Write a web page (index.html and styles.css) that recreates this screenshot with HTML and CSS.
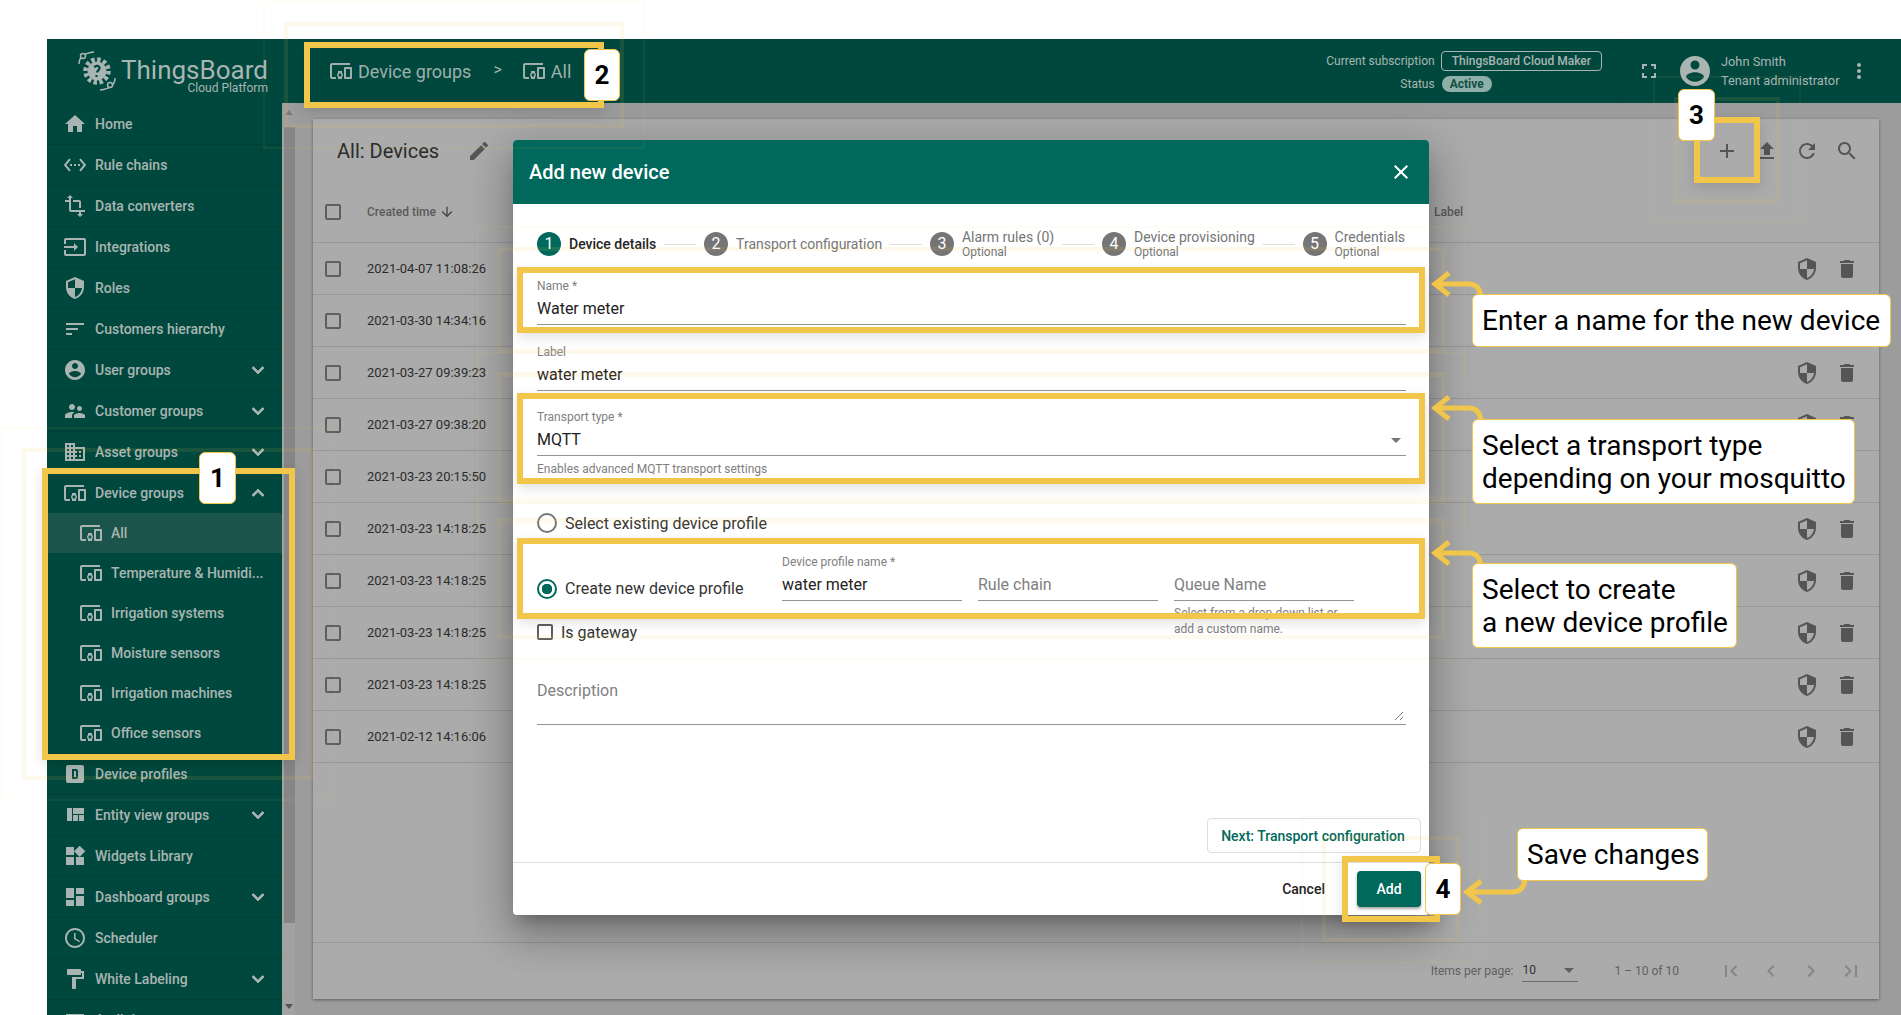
FILE: index.html
```html
<!DOCTYPE html>
<html lang="en">

<head>
  <meta charset="utf-8">
  <title>Add new device</title>
  <link rel="stylesheet" href="styles.css">
</head>

<body>
  <svg class="sprite" xmlns="http://www.w3.org/2000/svg">
    <symbol id="i-home" viewBox="0 0 24 24"><path d="M10 20v-6h4v6h5v-8h3L12 3 2 12h3v8z"/></symbol>
    <symbol id="i-rule" viewBox="0 0 24 24"><path d="M7.77 6.76L6.23 5.48.82 12l5.41 6.52 1.54-1.28L3.42 12l4.35-5.24zM7 13h2v-2H7v2zm10-2h-2v2h2v-2zm-6 2h2v-2h-2v2zm6.77-7.52l-1.54 1.28L20.58 12l-4.35 5.24 1.54 1.28L23.18 12l-5.41-6.52z"/></symbol>
    <symbol id="i-transform" viewBox="0 0 24 24"><path d="M22 18v-2H8V4h2L7 1 4 4h2v2H2v2h4v8c0 1.1.9 2 2 2h8v2h-2l3 3 3-3h-2v-2h4zM10 8h6v6h2V8c0-1.1-.9-2-2-2h-6v2z"/></symbol>
    <symbol id="i-input" viewBox="0 0 24 24"><path d="M21 3.01H3c-1.1 0-2 .9-2 2V9h2V4.99h18v14.03H3V15H1v4.01c0 1.1.9 1.98 2 1.98h18c1.1 0 2-.88 2-1.98v-14c0-1.11-.9-2-2-2zM11 16l4-4-4-4v3H1v2h10v3z"/></symbol>
    <symbol id="i-security" viewBox="0 0 24 24"><path d="M12 1L3 5v6c0 5.55 3.84 10.74 9 12 5.16-1.26 9-6.45 9-12V5l-9-4zm0 10.99h7c-.53 4.12-3.28 7.79-7 8.94V12H5V6.3l7-3.11v8.8z"/></symbol>
    <symbol id="i-sort" viewBox="0 0 24 24"><path d="M3 18h6v-2H3v2zM3 6v2h18V6H3zm0 7h12v-2H3v2z"/></symbol>
    <symbol id="i-account" viewBox="0 0 24 24"><path d="M12 2C6.48 2 2 6.48 2 12s4.48 10 10 10 10-4.48 10-10S17.52 2 12 2zm0 3c1.66 0 3 1.34 3 3s-1.34 3-3 3-3-1.34-3-3 1.34-3 3-3zm0 14.2c-2.5 0-4.71-1.28-6-3.22.03-1.99 4-3.08 6-3.08 1.99 0 5.97 1.09 6 3.08-1.29 1.94-3.5 3.22-6 3.22z"/></symbol>
    <symbol id="i-people" viewBox="0 0 24 24"><path d="M16.5 12c1.38 0 2.49-1.12 2.49-2.5S17.88 7 16.5 7C15.12 7 14 8.12 14 9.5s1.12 2.5 2.5 2.5zM9 11c1.66 0 2.99-1.34 2.99-3S10.66 5 9 5C7.34 5 6 6.34 6 8s1.34 3 3 3zm7.5 3c-1.83 0-5.5.92-5.5 2.75V19h11v-2.25c0-1.83-3.67-2.75-5.5-2.75zM9 13c-2.33 0-7 1.17-7 3.5V19h7v-2.25c0-.85.33-2.34 2.37-3.47C10.5 13.1 9.66 13 9 13z"/></symbol>
    <symbol id="i-domain" viewBox="0 0 24 24"><path d="M12 7V3H2v18h20V7H12zM6 19H4v-2h2v2zm0-4H4v-2h2v2zm0-4H4V9h2v2zm0-4H4V5h2v2zm4 12H8v-2h2v2zm0-4H8v-2h2v2zm0-4H8V9h2v2zm0-4H8V5h2v2zm10 12h-8v-2h2v-2h-2v-2h2v-2h-2V9h8v10zm-2-8h-2v2h2v-2zm0 4h-2v2h2v-2z"/></symbol>
    <symbol id="i-devices" viewBox="0 0 24 24"><path d="M3 6h18V4H3c-1.1 0-2 .9-2 2v12c0 1.1.9 2 2 2h4v-2H3V6zm10 6H9v1.78c-.61.55-1 1.33-1 2.22s.39 1.67 1 2.22V20h4v-1.78c.61-.55 1-1.34 1-2.22s-.39-1.67-1-2.22V12zm-2 5.5c-.83 0-1.5-.67-1.5-1.5s.67-1.5 1.5-1.5 1.5.67 1.5 1.5-.67 1.5-1.5 1.5zM22 8h-6c-.5 0-1 .5-1 1v10c0 .5.5 1 1 1h6c.5 0 1-.5 1-1V9c0-.5-.5-1-1-1zm-1 10h-4v-8h4v8z"/></symbol>
    <symbol id="i-dbox" viewBox="0 0 24 24"><path fill-rule="evenodd" d="M9 7v10h4a2 2 0 0 0 2-2V9a2 2 0 0 0-2-2H9m2 2h2v6h-2V9M5 3h14a2 2 0 0 1 2 2v14a2 2 0 0 1-2 2H5a2 2 0 0 1-2-2V5a2 2 0 0 1 2-2z"/></symbol>
    <symbol id="i-quilt" viewBox="0 0 24 24"><path d="M10 18h5v-6h-5v6zm-6 0h5V5H4v13zm12 0h5v-6h-5v6zM10 5v6h11V5H10z"/></symbol>
    <symbol id="i-widgets" viewBox="0 0 24 24"><path d="M13 13v8h8v-8h-8zM3 21h8v-8H3v8zM3 3v8h8V3H3zm13.66-1.31L11 7.34 16.66 13l5.66-5.66-5.66-5.65z"/></symbol>
    <symbol id="i-dashboard" viewBox="0 0 24 24"><path d="M3 13h8V3H3v10zm0 8h8v-6H3v6zm10 0h8V11h-8v10zm0-18v6h8V3h-8z"/></symbol>
    <symbol id="i-schedule" viewBox="0 0 24 24"><path d="M11.99 2C6.47 2 2 6.48 2 12s4.47 10 9.99 10C17.52 22 22 17.52 22 12S17.52 2 11.99 2zM12 20c-4.42 0-8-3.58-8-8s3.58-8 8-8 8 3.58 8 8-3.58 8-8 8zm.5-13H11v6l5.25 3.15.75-1.23-4.5-2.67z"/></symbol>
    <symbol id="i-paint" viewBox="0 0 24 24"><path d="M18 4V3c0-.55-.45-1-1-1H5c-.55 0-1 .45-1 1v4c0 .55.45 1 1 1h12c.55 0 1-.45 1-1V6h1v4H9v11c0 .55.45 1 1 1h2c.55 0 1-.45 1-1v-9h8V4h-3z"/></symbol>
    <symbol id="i-more" viewBox="0 0 24 24"><path d="M16.59 8.59L12 13.17 7.41 8.59 6 10l6 6 6-6z"/></symbol>
    <symbol id="i-less" viewBox="0 0 24 24"><path d="M12 8l-6 6 1.41 1.41L12 10.83l4.59 4.58L18 14z"/></symbol>
    <symbol id="i-edit" viewBox="0 0 24 24"><path d="M3 17.25V21h3.75L17.81 9.94l-3.75-3.75L3 17.25zM20.71 7.04c.39-.39.39-1.02 0-1.41l-2.34-2.34c-.39-.39-1.02-.39-1.41 0l-1.83 1.83 3.75 3.75 1.83-1.83z"/></symbol>
    <symbol id="i-add" viewBox="0 0 24 24"><path d="M19 13h-6v6h-2v-6H5v-2h6V5h2v6h6v2z"/></symbol>
    <symbol id="i-upload" viewBox="0 0 24 24"><path d="M9 16h6v-6h4l-7-7-7 7h4zm-4 2h14v2H5z"/></symbol>
    <symbol id="i-refresh" viewBox="0 0 24 24"><path d="M17.65 6.35C16.2 4.9 14.21 4 12 4c-4.42 0-7.99 3.58-7.99 8s3.57 8 7.99 8c3.73 0 6.84-2.55 7.73-6h-2.08c-.82 2.33-3.04 4-5.65 4-3.31 0-6-2.69-6-6s2.69-6 6-6c1.66 0 3.14.69 4.22 1.78L13 11h7V4l-2.35 2.35z"/></symbol>
    <symbol id="i-search" viewBox="0 0 24 24"><path d="M15.5 14h-.79l-.28-.27C15.41 12.59 16 11.11 16 9.5 16 5.91 13.09 3 9.5 3S3 5.91 3 9.5 5.91 16 9.5 16c1.61 0 3.09-.59 4.23-1.57l.27.28v.79l5 4.99L20.49 19l-4.99-5zm-6 0C7.01 14 5 11.99 5 9.5S7.01 5 9.5 5 14 7.01 14 9.5 11.99 14 9.5 14z"/></symbol>
    <symbol id="i-delete" viewBox="0 0 24 24"><path d="M6 19c0 1.1.9 2 2 2h8c1.1 0 2-.9 2-2V7H6v12zM19 4h-3.5l-1-1h-5l-1 1H5v2h14V4z"/></symbol>
    <symbol id="i-close" viewBox="0 0 24 24"><path d="M19 6.41L17.59 5 12 10.59 6.41 5 5 6.41 10.59 12 5 17.59 6.41 19 12 13.41 17.59 19 19 17.59 13.41 12z"/></symbol>
    <symbol id="i-fullscreen" viewBox="0 0 24 24"><path d="M7 14H5v5h5v-2H7v-3zm-2-4h2V7h3V5H5v5zm12 7h-3v2h5v-5h-2v3zM14 5v2h3v3h2V5h-5z"/></symbol>
    <symbol id="i-dots" viewBox="0 0 24 24"><path d="M12 8c1.1 0 2-.9 2-2s-.9-2-2-2-2 .9-2 2 .9 2 2 2zm0 2c-1.1 0-2 .9-2 2s.9 2 2 2 2-.9 2-2-.9-2-2-2zm0 6c-1.1 0-2 .9-2 2s.9 2 2 2 2-.9 2-2-.9-2-2-2z"/></symbol>
    <symbol id="i-down" viewBox="0 0 24 24"><path d="M20 12l-1.41-1.41L13 16.17V4h-2v12.17l-5.58-5.59L4 12l8 8 8-8z"/></symbol>
    <symbol id="i-first" viewBox="0 0 24 24"><path d="M18.41 16.59L13.82 12l4.59-4.59L17 6l-6 6 6 6zM6 6h2v12H6z"/></symbol>
    <symbol id="i-prev" viewBox="0 0 24 24"><path d="M15.41 7.41L14 6l-6 6 6 6 1.41-1.41L10.83 12z"/></symbol>
    <symbol id="i-next" viewBox="0 0 24 24"><path d="M10 6L8.59 7.41 13.17 12l-4.58 4.59L10 18l6-6z"/></symbol>
    <symbol id="i-last" viewBox="0 0 24 24"><path d="M5.59 7.41L10.18 12l-4.59 4.59L7 18l6-6-6-6zM16 6h2v12h-2z"/></symbol>
  </svg>

  <div class="app">
    <header class="toolbar">
      <div class="logo">
        <svg class="logo-mark" viewBox="0 0 40 40">
          <circle cx="20" cy="20" r="9.5" fill="#a9b5b2"/>
          <circle cx="20" cy="20" r="11.5" fill="none" stroke="#a9b5b2" stroke-width="4.500" stroke-dasharray="3.500 2.500"/>
          <path d="M17.5 16.5c1-2.5 5.500-2 5 1-.3 1.800-2.500 2-2.500 4M19.500 24v2" fill="none" stroke="#00483d" stroke-width="2.200"/>
          <path d="M2 13C2 6 8 2 17 1M38 27c0 7-6 11-15 12" fill="none" stroke="#a9b5b2" stroke-width="1.500"/>
          <circle cx="6" cy="5" r="2.500" fill="#00483d" stroke="#a9b5b2" stroke-width="1.500"/>
          <circle cx="33" cy="34" r="2.500" fill="#00483d" stroke="#a9b5b2" stroke-width="1.500"/>
        </svg>
        <div class="logo-text">
          <div class="logo-name">ThingsBoard</div>
          <div class="logo-sub">Cloud Platform</div>
        </div>
      </div>
      <div class="crumbs">
        <svg class="ic"><use href="#i-devices"/></svg><span class="crumb">Device groups</span>
        <span class="crumb-sep">&gt;</span>
        <svg class="ic"><use href="#i-devices"/></svg><span class="crumb">All</span>
      </div>
      <div class="subscription">
        <span class="sub-label">Current subscription</span><span class="sub-plan">ThingsBoard Cloud Maker</span>
        <span class="sub-label">Status</span><span class="sub-status">Active</span>
      </div>
      <div class="tool-user">
        <svg class="ic"><use href="#i-fullscreen"/></svg>
        <svg class="avatar"><use href="#i-account"/></svg>
        <div class="user-text">
          <div class="user-name">John Smith</div>
          <div class="user-role">Tenant administrator</div>
        </div>
        <svg class="ic"><use href="#i-dots"/></svg>
      </div>
    </header>

    <div class="shell">
      <nav class="sidebar">
        <a class="nav-item"><svg class="ic"><use href="#i-home"/></svg>Home</a>
        <a class="nav-item"><svg class="ic"><use href="#i-rule"/></svg>Rule chains</a>
        <a class="nav-item"><svg class="ic"><use href="#i-transform"/></svg>Data converters</a>
        <a class="nav-item"><svg class="ic"><use href="#i-input"/></svg>Integrations</a>
        <a class="nav-item"><svg class="ic"><use href="#i-security"/></svg>Roles</a>
        <a class="nav-item"><svg class="ic"><use href="#i-sort"/></svg>Customers hierarchy</a>
        <a class="nav-item"><svg class="ic"><use href="#i-account"/></svg>User groups<svg class="ic nav-arrow"><use href="#i-more"/></svg></a>
        <a class="nav-item"><svg class="ic"><use href="#i-people"/></svg>Customer groups<svg class="ic nav-arrow"><use href="#i-more"/></svg></a>
        <a class="nav-item"><svg class="ic"><use href="#i-domain"/></svg>Asset groups<svg class="ic nav-arrow"><use href="#i-more"/></svg></a>
        <a class="nav-item nav-open"><svg class="ic"><use href="#i-devices"/></svg>Device groups<svg class="ic nav-arrow"><use href="#i-less"/></svg></a>
        <div class="nav-sub">
          <a class="sub-item active"><svg class="ic"><use href="#i-devices"/></svg>All</a>
          <a class="sub-item"><svg class="ic"><use href="#i-devices"/></svg>Temperature &amp; Humidi...</a>
          <a class="sub-item"><svg class="ic"><use href="#i-devices"/></svg>Irrigation systems</a>
          <a class="sub-item"><svg class="ic"><use href="#i-devices"/></svg>Moisture sensors</a>
          <a class="sub-item"><svg class="ic"><use href="#i-devices"/></svg>Irrigation machines</a>
          <a class="sub-item"><svg class="ic"><use href="#i-devices"/></svg>Office sensors</a>
        </div>
        <a class="nav-item"><svg class="ic"><use href="#i-dbox"/></svg>Device profiles</a>
        <a class="nav-item"><svg class="ic"><use href="#i-quilt"/></svg>Entity view groups<svg class="ic nav-arrow"><use href="#i-more"/></svg></a>
        <a class="nav-item"><svg class="ic"><use href="#i-widgets"/></svg>Widgets Library</a>
        <a class="nav-item"><svg class="ic"><use href="#i-dashboard"/></svg>Dashboard groups<svg class="ic nav-arrow"><use href="#i-more"/></svg></a>
        <a class="nav-item"><svg class="ic"><use href="#i-schedule"/></svg>Scheduler</a>
        <a class="nav-item"><svg class="ic"><use href="#i-paint"/></svg>White Labeling<svg class="ic nav-arrow"><use href="#i-more"/></svg></a>
        <a class="nav-item"><svg class="ic"><use href="#i-sort"/></svg>Audit logs</a>
      </nav>
      <div class="side-scroll">
        <div class="scroll-up"></div>
        <div class="scroll-thumb"></div>
        <div class="scroll-down"></div>
      </div>

      <main class="content">
        <section class="card">
          <div class="card-head">
            <span class="card-title">All: Devices</span>
            <svg class="ic"><use href="#i-edit"/></svg>
            <div class="card-actions">
              <svg class="ic"><use href="#i-add"/></svg>
              <svg class="ic"><use href="#i-upload"/></svg>
              <svg class="ic"><use href="#i-refresh"/></svg>
              <svg class="ic"><use href="#i-search"/></svg>
            </div>
          </div>
          <div class="row row-head">
            <span class="check"></span>
            <span class="col-time">Created time <svg class="sort-ic"><use href="#i-down"/></svg></span>
            <span>Label</span>
          </div>
          <div class="row"><span class="check"></span><span class="col-time">2021-04-07 11:08:26</span><span class="row-actions"><svg class="ic"><use href="#i-security"/></svg><svg class="ic"><use href="#i-delete"/></svg></span></div>
          <div class="row"><span class="check"></span><span class="col-time">2021-03-30 14:34:16</span><span class="row-actions"><svg class="ic"><use href="#i-security"/></svg><svg class="ic"><use href="#i-delete"/></svg></span></div>
          <div class="row"><span class="check"></span><span class="col-time">2021-03-27 09:39:23</span><span class="row-actions"><svg class="ic"><use href="#i-security"/></svg><svg class="ic"><use href="#i-delete"/></svg></span></div>
          <div class="row"><span class="check"></span><span class="col-time">2021-03-27 09:38:20</span><span class="row-actions"><svg class="ic"><use href="#i-security"/></svg><svg class="ic"><use href="#i-delete"/></svg></span></div>
          <div class="row"><span class="check"></span><span class="col-time">2021-03-23 20:15:50</span><span class="row-actions"><svg class="ic"><use href="#i-security"/></svg><svg class="ic"><use href="#i-delete"/></svg></span></div>
          <div class="row"><span class="check"></span><span class="col-time">2021-03-23 14:18:25</span><span class="row-actions"><svg class="ic"><use href="#i-security"/></svg><svg class="ic"><use href="#i-delete"/></svg></span></div>
          <div class="row"><span class="check"></span><span class="col-time">2021-03-23 14:18:25</span><span class="row-actions"><svg class="ic"><use href="#i-security"/></svg><svg class="ic"><use href="#i-delete"/></svg></span></div>
          <div class="row"><span class="check"></span><span class="col-time">2021-03-23 14:18:25</span><span class="row-actions"><svg class="ic"><use href="#i-security"/></svg><svg class="ic"><use href="#i-delete"/></svg></span></div>
          <div class="row"><span class="check"></span><span class="col-time">2021-03-23 14:18:25</span><span class="row-actions"><svg class="ic"><use href="#i-security"/></svg><svg class="ic"><use href="#i-delete"/></svg></span></div>
          <div class="row"><span class="check"></span><span class="col-time">2021-02-12 14:16:06</span><span class="row-actions"><svg class="ic"><use href="#i-security"/></svg><svg class="ic"><use href="#i-delete"/></svg></span></div>
          <div class="pager">
            <span>Items per page:</span>
            <span class="pager-select">10</span>
            <span class="pager-range">1 – 10 of 10</span>
            <div class="pager-btns">
              <svg class="ic"><use href="#i-first"/></svg>
              <svg class="ic"><use href="#i-prev"/></svg>
              <svg class="ic"><use href="#i-next"/></svg>
              <svg class="ic"><use href="#i-last"/></svg>
            </div>
          </div>
        </section>
      </main>
    </div>
  </div>

  <div class="modal">
    <div class="modal-head">
      <span>Add new device</span>
      <svg class="ic"><use href="#i-close"/></svg>
    </div>
    <div class="stepper">
      <div class="step on"><span class="step-num">1</span><div>Device details</div></div>
      <span class="step-line"></span>
      <div class="step"><span class="step-num">2</span><div>Transport configuration</div></div>
      <span class="step-line"></span>
      <div class="step"><span class="step-num">3</span><div>Alarm rules (0)<small>Optional</small></div></div>
      <span class="step-line"></span>
      <div class="step"><span class="step-num">4</span><div>Device provisioning<small>Optional</small></div></div>
      <span class="step-line"></span>
      <div class="step"><span class="step-num">5</span><div>Credentials<small>Optional</small></div></div>
    </div>
    <div class="modal-body">
      <div class="field">
        <label>Name *</label>
        <div class="value">Water meter</div>
      </div>
      <div class="field field-label">
        <label>Label</label>
        <div class="value">water meter</div>
      </div>
      <div class="field field-type">
        <label>Transport type *</label>
        <div class="value">MQTT<span class="caret"></span></div>
      </div>
      <div class="hint">Enables advanced MQTT transport settings</div>

      <div class="radio-row"><span class="radio"></span>Select existing device profile</div>
      <div class="profile-row">
        <div class="radio-row radio-new"><span class="radio checked"></span>Create new device profile</div>
        <div class="field col">
          <label>Device profile name *</label>
          <div class="value">water meter</div>
        </div>
        <div class="field col">
          <label>&nbsp;</label>
          <div class="value empty">Rule chain</div>
        </div>
        <div class="field col">
          <label>&nbsp;</label>
          <div class="value empty">Queue Name</div>
          <div class="hint">Select from a drop-down list or add a custom name.</div>
        </div>
      </div>
      <div class="gateway"><span class="check"></span>Is gateway</div>
      <div class="description">
        Description
        <svg class="grip" viewBox="0 0 10 10"><path d="M1 9L9 1M6 9L9 6" stroke="#777" fill="none"/></svg>
      </div>
      <div class="next-wrap"><span class="next-btn">Next: Transport configuration</span></div>
    </div>
    <div class="modal-foot">
      <span class="cancel">Cancel</span>
      <span class="add-btn">Add</span>
    </div>
  </div>

  <!-- tutorial annotations drawn over the screenshot -->
  <div class="mark mark-sidebar"></div>
  <div class="mark mark-crumbs"></div>
  <div class="mark mark-add"></div>
  <div class="mark mark-name"></div>
  <div class="mark mark-type"></div>
  <div class="mark mark-profile"></div>
  <div class="mark mark-save"></div>

  <div class="badge badge-1">1</div>
  <div class="badge badge-2">2</div>
  <div class="badge badge-3">3</div>
  <div class="badge badge-4">4</div>

  <svg class="arrow arrow-name" viewBox="0 0 60 28"><path d="M20 3L6 14L20 25M6 14H40Q50 14 52 26"/></svg>
  <svg class="arrow arrow-type" viewBox="0 0 60 28"><path d="M20 3L6 14L20 25M6 14H40Q50 14 52 26"/></svg>
  <svg class="arrow arrow-profile" viewBox="0 0 60 28"><path d="M20 3L6 14L20 25M6 14H40Q50 14 52 26"/></svg>
  <svg class="arrow arrow-save" viewBox="0 0 66 28"><path d="M20 3L6 14L20 25M6 14H52Q62 14 64 2"/></svg>

  <div class="callout callout-name">Enter a name for the new device</div>
  <div class="callout callout-type">Select a transport type<br>depending on your mosquitto</div>
  <div class="callout callout-profile">Select to create<br>a new device profile</div>
  <div class="callout callout-save">Save changes</div>
</body>

</html>
```

FILE: styles.css
```css
* {
  box-sizing: border-box;
}

html,
body {
  margin: 0;
  height: 1015px;
  overflow: hidden;
  background: #fff;
  font-family: 'Roboto', 'Liberation Sans', sans-serif;
  font-size: 14px;
}

.sprite {
  display: none;
}

.ic {
  width: 24px;
  height: 24px;
  flex: none;
  fill: currentColor;
}

.app {
  margin: 39px 0 0 47px;
  height: 976px;
  display: flex;
  flex-direction: column;
}

/* Toolbar */
.toolbar {
  height: 64px;
  flex: none;
  display: flex;
  align-items: center;
  background: #00483d;
  color: #a9b5b2;
}

.logo {
  width: 235px;
  flex: none;
  display: flex;
  padding-left: 30px;
  gap: 4px;
  align-items: center;
}

.logo-mark {
  width: 40px;
  height: 40px;
  flex: none;
}

.logo-text {
  text-align: right;
  padding-top: 12px;
}

.logo-name {
  font-size: 26px;
  line-height: 22px;
}

.logo-sub {
  font-size: 12px;
  line-height: 14px;
}

.crumbs {
  display: flex;
  align-items: center;
  padding-left: 47px;
  font-size: 18px;
  gap: 5px;
  color: #9db0ab;
}

.crumb-sep {
  margin: -4px 15px 0 17px;
  font-size: 16px;
}

.subscription {
  margin-left: auto;
  display: grid;
  grid-template-columns: auto auto;
  justify-items: end;
  align-items: center;
  row-gap: 5px;
  column-gap: 6px;
  font-size: 12px;
}

.sub-plan {
  justify-self: start;
  height: 20px;
  line-height: 18px;
  padding: 0 10px;
  border: 1px solid #a9b5b2;
  border-radius: 4px;
  font-weight: 500;
}

.sub-status {
  justify-self: start;
  margin-left: 1px;
  height: 16px;
  line-height: 16px;
  padding: 0 8px;
  border-radius: 8px;
  background: #8fb0a8;
  color: #114f44;
  font-weight: 700;
  font-size: 12px;
}

.tool-user {
  margin-left: 16px;
  padding: 0 30px 0 18px;
  height: 100%;
  display: flex;
  align-items: center;
  border-left: 1px solid #004238;
}

.avatar {
  width: 36px;
  height: 36px;
  fill: currentColor;
  margin-left: 16px;
}

.user-text {
  width: 126px;
  margin-left: 8px;
  padding-bottom: 1px;
  font-size: 12.8px;
  line-height: 19px;
}

/* Sidebar */
.shell {
  flex: 1;
  display: flex;
  min-height: 0;
}

.sidebar {
  width: 235px;
  flex: none;
  padding-top: 1px;
  background: #00483d;
  color: #a9b5b2;
  font-weight: 500;
  overflow: hidden;
}

.nav-item {
  height: 41px;
  padding: 0 12px 0 16px;
  display: flex;
  align-items: center;
  gap: 8px;
  border-bottom: 1px solid #004036;
}

.nav-open {
  height: 40px;
  border-bottom: 0;
}

.nav-arrow {
  margin-left: auto;
  stroke: currentColor;
  stroke-width: .8;
}

.nav-sub {
  border-bottom: 1px solid #004036;
}

.sub-item {
  height: 40px;
  padding-left: 32px;
  display: flex;
  align-items: center;
  gap: 8px;
}

.sub-item.active {
  background: #1a544a;
}

.side-scroll {
  width: 13px;
  flex: none;
  background: #a2a2a2;
  display: flex;
  flex-direction: column;
  padding-left: 2px;
}

.scroll-up {
  height: 24px;
  margin-left: -2px;
  position: relative;
  background: #9d9d9d;
}

.scroll-up::after {
  content: '';
  display: block;
  width: 0;
  margin: 7px auto 0;
  border: 4px solid transparent;
  border-top: 0;
  border-bottom: 5px solid #7a7a7a;
}

.scroll-thumb {
  height: 796px;
  background: #868686;
}

.scroll-down {
  margin-top: auto;
  margin-bottom: 6px;
  margin-left: -2px;
}

.scroll-down::after {
  content: '';
  display: block;
  width: 0;
  margin: 0 auto;
  border: 4px solid transparent;
  border-bottom: 0;
  border-top: 5px solid #555;
}

/* Devices table behind the dialog */
.content {
  flex: 1;
  min-width: 0;
  background: #9c9c9c;
  padding: 16px 22px 0 18px;
}

.card {
  height: 880px;
  background: #ababab;
  color: #2b2b2b;
  display: flex;
  flex-direction: column;
  box-shadow: 0 1px 3px rgba(0, 0, 0, .4);
}

.card-head {
  height: 64px;
  flex: none;
  display: flex;
  align-items: center;
  padding: 0 20px 0 24px;
  color: #555;
}

.card-title {
  font-size: 20px;
  color: #2b2b2b;
  margin-right: 28px;
}

.card-actions {
  margin-left: auto;
  display: flex;
  gap: 16px;
}

.row {
  height: 52px;
  flex: none;
  display: flex;
  align-items: center;
  padding-left: 12px;
  border-bottom: 1px solid #979797;
  font-size: 13px;
}

.row-head {
  height: 60px;
  padding-bottom: 2px;
  font-size: 12px;
  font-weight: 500;
  color: #5a5a5a;
}

.check {
  width: 16px;
  height: 16px;
  flex: none;
  border: 2px solid #5f5f5f;
  border-radius: 2px;
}

.col-time {
  width: 1067px;
  flex: none;
  margin-left: 26px;
  display: flex;
  align-items: center;
  gap: 3px;
}

.sort-ic {
  width: 16px;
  height: 16px;
  fill: #444;
}

.row-actions {
  margin-left: auto;
  padding-right: 20px;
  display: flex;
  gap: 16px;
  color: #555;
}

.pager {
  margin-top: auto;
  height: 57px;
  flex: none;
  display: flex;
  align-items: center;
  padding: 0 16px 0 0;
  justify-content: flex-end;
  border-top: 1px solid #979797;
  font-size: 12px;
  color: #5f5f5f;
}

.pager-select {
  width: 56px;
  height: 21px;
  line-height: 18px;
  margin: 1px 0 0 9px;
  border-bottom: 1px solid #6a6a6a;
  color: #333;
  position: relative;
}

.pager-select::after {
  content: '';
  position: absolute;
  right: 4px;
  top: 7px;
  border: 5px solid transparent;
  border-bottom: 0;
  border-top: 5px solid #5f5f5f;
}

.pager-range {
  margin-left: 36px;
}

.pager-btns {
  margin-left: 40px;
  display: flex;
  gap: 16px;
  color: #868686;
}

/* Dialog */
.modal {
  position: absolute;
  left: 513px;
  top: 140px;
  width: 916px;
  height: 775px;
  display: flex;
  flex-direction: column;
  background: #fff;
  border-radius: 4px;
  box-shadow: 0 11px 15px -7px rgba(0, 0, 0, .25), 0 24px 38px 3px rgba(0, 0, 0, .16), 0 9px 46px 8px rgba(0, 0, 0, .14);
}

.modal-head {
  height: 64px;
  flex: none;
  padding: 0 16px;
  display: flex;
  align-items: center;
  justify-content: space-between;
  background: #00695c;
  border-radius: 4px 4px 0 0;
  color: #fff;
  font-size: 20px;
  font-weight: 500;
}

.stepper {
  height: 74px;
  flex: none;
  display: flex;
  align-items: center;
  padding: 6px 24px 0;
  font-size: 14px;
  color: #757575;
}

.step {
  display: flex;
  align-items: center;
  gap: 8px;
  flex: none;
  line-height: 16px;
}

.step small {
  display: block;
  font-size: 12px;
  line-height: 14px;
}

.step-num {
  width: 24px;
  height: 24px;
  flex: none;
  border-radius: 50%;
  background: #757575;
  color: #fff;
  text-align: center;
  line-height: 24px;
  font-size: 16px;
}

.step.on {
  color: #222;
  font-weight: 500;
}

.step.on .step-num {
  background: #00695c;
  font-weight: 400;
}

.step-line {
  flex: 1;
  height: 1px;
  margin: 0 8px;
  background: #ddd;
}

.modal-body {
  flex: 1;
  padding: 0 23px 0 24px;
  display: flex;
  flex-direction: column;
  min-height: 0;
}

.field label {
  display: block;
  font-size: 12px;
  line-height: 16px;
  color: #808080;
}

.value {
  margin-top: 5px;
  height: 26px;
  padding-bottom: 5px;
  font-size: 16px;
  line-height: 20px;
  color: #222;
  border-bottom: 1px solid #949494;
  position: relative;
}

.value.empty {
  color: #808080;
}

.field-label {
  margin-top: 19px;
}

.field-type {
  margin-top: 18px;
}

.caret {
  position: absolute;
  right: 5px;
  top: 8px;
  border: 5px solid transparent;
  border-bottom: 0;
  border-top: 5px solid #757575;
}

.hint {
  font-size: 12px;
  line-height: 16px;
  color: #808080;
}

.field-type + .hint {
  margin-top: 5px;
}

.radio-row {
  display: flex;
  align-items: center;
  gap: 8px;
  height: 20px;
  margin-top: 36px;
  font-size: 16px;
  color: #333;
}

.radio {
  width: 20px;
  height: 20px;
  flex: none;
  border: 2px solid #757575;
  border-radius: 50%;
}

.radio.checked {
  border-color: #00695c;
  background: radial-gradient(circle, #00695c 0 5px, transparent 5.5px);
}

.profile-row {
  height: 59px;
  margin-top: 21px;
  display: flex;
  gap: 16px;
}

.radio-new {
  width: 229px;
  flex: none;
  margin: 25px 0 0;
  line-height: 18px;
  padding-bottom: 1px;
}

.col {
  width: 180px;
  flex: none;
}

.col .hint {
  margin-top: 4px;
}

.gateway {
  margin-top: 9px;
  height: 20px;
  display: flex;
  align-items: center;
  gap: 8px;
  font-size: 16px;
  color: #333;
}

.description {
  margin-top: 38px;
  height: 45px;
  padding-top: 1px;
  line-height: 20px;
  font-size: 16px;
  color: #808080;
  border-bottom: 1px solid #949494;
  position: relative;
}

.grip {
  position: absolute;
  right: 2px;
  bottom: 3px;
  width: 10px;
  height: 10px;
}

.next-wrap {
  margin-top: auto;
  margin-right: -15px;
  margin-bottom: 9px;
  display: flex;
  justify-content: flex-end;
}

.next-btn {
  height: 35px;
  width: 214px;
  line-height: 34px;
  padding-right: 2px;
  text-align: center;
  font-weight: 500;
  color: #00695c;
  border: 1px solid #ddd;
  border-radius: 4px;
}

.modal-foot {
  height: 53px;
  flex: none;
  padding-right: 8px;
  display: flex;
  align-items: center;
  justify-content: flex-end;
  border-top: 1px solid #ddd;
  font-weight: 500;
}

.cancel {
  margin-right: 32px;
  color: #222;
}

.add-btn {
  width: 64px;
  height: 36px;
  line-height: 36px;
  text-align: center;
  color: #fff;
  background: #00695c;
  border-radius: 4px;
  box-shadow: 0 2px 3px rgba(0, 0, 0, .35);
}

/* Annotations */
.mark {
  position: absolute;
  border: 6px solid #f2c54b;
  box-shadow: 0 4px 12px rgba(0, 0, 0, .12);
}

.mark::before,
.mark::after {
  content: '';
  position: absolute;
  pointer-events: none;
}

.mark::before {
  inset: -26px;
  border: 4px solid rgba(242, 197, 75, .1);
}

.mark::after {
  inset: -47px;
  border: 2px solid rgba(242, 197, 75, .06);
}

.mark-sidebar {
  left: 42px;
  top: 468px;
  width: 253px;
  height: 292px;
}

.mark-crumbs {
  left: 304px;
  top: 42px;
  width: 300px;
  height: 66px;
}

.mark-add {
  left: 1694px;
  top: 117px;
  width: 66px;
  height: 66px;
}

.mark-name {
  left: 517px;
  top: 267px;
  width: 908px;
  height: 66px;
}

.mark-type {
  left: 517px;
  top: 393px;
  width: 908px;
  height: 91px;
}

.mark-profile {
  left: 517px;
  top: 538px;
  width: 908px;
  height: 81px;
}

.mark-save {
  left: 1342px;
  top: 856px;
  width: 98px;
  height: 66px;
}

.badge {
  position: absolute;
  width: 36px;
  height: 52px;
  display: flex;
  align-items: center;
  justify-content: center;
  background: #fff;
  border: 1px solid #f2c54b;
  border-radius: 6px;
  font-size: 26px;
  font-weight: 700;
  color: #000;
}

.badge-1 {
  left: 199px;
  top: 452px;
  width: 37px;
}

.badge-2 {
  left: 584px;
  top: 49px;
}

.badge-3 {
  left: 1678px;
  top: 89px;
  width: 37px;
}

.badge-4 {
  left: 1425px;
  top: 863px;
}

.arrow {
  position: absolute;
  width: 60px;
  height: 28px;
  fill: none;
  stroke: #f2c54b;
  stroke-width: 5;
}

.arrow-name {
  left: 1429px;
  top: 270px;
}

.arrow-type {
  left: 1429px;
  top: 394px;
}

.arrow-profile {
  left: 1429px;
  top: 539px;
}

.arrow-save {
  left: 1461px;
  top: 878px;
  width: 66px;
}

.callout {
  position: absolute;
  padding: 9px 9px 0;
  background: #fff;
  border: 1px solid #f2c54b;
  border-radius: 6px;
  font-size: 28px;
  line-height: 33px;
  color: #000;
  white-space: nowrap;
}

.callout-name {
  left: 1472px;
  top: 294px;
  width: 419px;
  height: 53px;
}

.callout-type {
  left: 1472px;
  top: 419px;
  width: 383px;
  height: 85px;
}

.callout-profile {
  left: 1472px;
  top: 563px;
  width: 265px;
  height: 85px;
}

.callout-save {
  left: 1517px;
  top: 828px;
  width: 191px;
  height: 53px;
}
```
